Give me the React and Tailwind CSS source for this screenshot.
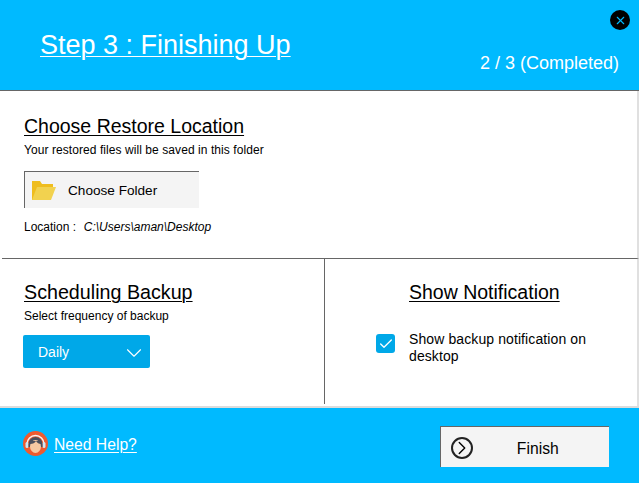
import { ChevronDown, Check, ChevronRight, X } from 'lucide-react';

const FolderIcon = () => (
    <svg width="24" height="20" viewBox="0 0 24 20">
        <path d="M0 1h8l2 3h11v3H6L2 20H0z" fill="#efbd1e" />
        <path d="M5 7h19l-5 13H0z" fill="#f2d24f" />
    </svg>
);

const HelpAvatar = () => (
    <svg width="25" height="25" viewBox="0 0 25 25">
        <circle cx="12.5" cy="12.5" r="12.5" fill="#ee5a2f" />
        <path d="M4 13a8.5 8.5 0 0 1 17 0" fill="none" stroke="#f4f4f4" strokeWidth="1.5" />
        <rect x="2.5" y="11" width="3" height="6" rx="1.5" fill="#cfe6f2" />
        <rect x="19.5" y="11" width="3" height="6" rx="1.5" fill="#cfe6f2" />
        <path d="M5.5 13a7 7 0 0 1 14 0v3h-14z" fill="#4b4f5c" />
        <ellipse cx="12.5" cy="15.5" rx="5.5" ry="6.5" fill="#f6c9a2" />
        <path d="M7 13c3 0 5-1 6-3 1 2 3 3 5 3v-3H7z" fill="#4b4f5c" />
    </svg>
);

const App = () => {
    return (
        <div className="w-[639px] h-[483px] flex flex-col bg-white overflow-hidden font-['Liberation_Sans',Arial,sans-serif] text-black">
            <header className="h-[91px] shrink-0 flex justify-between bg-[#00baff] border-b border-[#666666] pl-10 pr-[9px] text-white">
                <h1 className="mt-[27px] text-[27px] leading-[36px] underline underline-offset-2 decoration-1">Step 3 : Finishing Up</h1>
                <div className="flex flex-col items-end">
                    <button className="mt-[10px] w-5 h-5 rounded-full bg-black flex items-center justify-center text-[#00baff]">
                        <X size={13} strokeWidth={2} />
                    </button>
                    <p className="mt-[21px] mr-[11px] text-[18px] leading-[24px]">2 / 3 (Completed)</p>
                </div>
            </header>

            <section className="h-[167px] shrink-0 pl-6 pt-[23px] border-r-2 border-[#e0e0e0]">
                <h2 className="text-[19.5px] leading-6 underline underline-offset-2 decoration-1">Choose Restore Location</h2>
                <p className="mt-[4px] text-[12px] leading-4 tracking-[0.07px]">Your restored files will be saved in this folder</p>
                <button className="mt-[13px] w-[175px] h-[37px] flex items-center pl-[7px] bg-[#f4f4f4] border-t border-l border-[#666666] text-[13.6px]">
                    <FolderIcon />
                    <span className="ml-[12px] mt-[3px]">Choose Folder</span>
                </button>
                <p className="mt-[11px] text-[12px] leading-4">
                    Location :&nbsp; <span className="ml-px italic">C:\Users\aman\Desktop</span>
                </p>
            </section>

            <section className="h-[148px] shrink-0 flex ml-[2px] border-t border-r-2 border-t-[#666666] border-r-[#e0e0e0]">
                <div className="w-[323px] h-[145px] shrink-0 border-r border-[#666666] pl-[22px] pt-[21px]">
                    <h2 className="text-[19.7px] leading-6 underline underline-offset-2 decoration-1">Scheduling Backup</h2>
                    <p className="mt-[4px] text-[12px] leading-4">Select frequency of backup</p>
                    <button className="mt-[11px] -ml-px w-[127px] h-[33px] flex items-center justify-between pl-[15px] pr-[3px] pt-[2px] bg-[#00a8e8] rounded-[2px] text-white text-[14px]">
                        Daily
                        <ChevronDown size={26} strokeWidth={1} />
                    </button>
                </div>
                <div className="flex-1 pt-[21px]">
                    <h2 className="ml-[84px] text-[19.5px] leading-6 underline underline-offset-2 decoration-1">Show Notification</h2>
                    <div className="mt-[27px] ml-[51px] flex gap-[14px]">
                        <span className="mt-[3px] w-[19px] h-[19px] shrink-0 flex items-center justify-center rounded-[3px] bg-[#00a8e8] text-white">
                            <Check size={16} strokeWidth={2} />
                        </span>
                        <p className="w-[190px] text-[14px] leading-[17px] tracking-[0.1px]">Show backup notification on desktop</p>
                    </div>
                </div>
            </section>

            <div className="h-[2px] shrink-0 bg-[#dcdcdc]" />

            <footer className="flex-1 flex bg-[#00baff] pl-[23px]">
                <div className="mt-[23px] flex items-start gap-[6px] h-[25px]">
                    <HelpAvatar />
                    <a href="#" className="mt-[2px] text-[15.7px] leading-6 text-white underline underline-offset-2 decoration-1">Need Help?</a>
                </div>
                <button className="ml-[303px] mt-[18px] w-[169px] h-[41px] flex items-center pl-[10px] pt-[2px] bg-[#f4f4f4] border-t border-l border-[#666666] text-[15.7px]">
                    <span className="w-[22px] h-[22px] flex items-center justify-center rounded-full border-2 border-[#222222]">
                        <ChevronRight className="shrink-0" size={22} strokeWidth={1.5} />
                    </span>
                    <span className="ml-[44px] mt-px">Finish</span>
                </button>
            </footer>
        </div>
    );
};

export default App;
